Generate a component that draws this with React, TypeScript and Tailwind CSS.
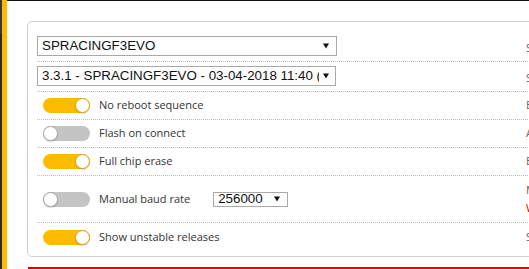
import React from "react";

type ToggleRowProps = {
  label: string;
  on: boolean;
  note: string;
};

function Arrow() {
  return (
    <svg width="6" height="6" viewBox="0 0 6 6" className="shrink-0">
      <polygon points="0,0.5 6,0.5 3,5.5" fill="#111" />
    </svg>
  );
}

function Toggle({ on }: { on: boolean }) {
  return (
    <div
      className={`relative h-[15px] w-[47px] shrink-0 rounded-full ${
        on ? "bg-[#ffbb00]" : "bg-[#c4c4c4]"
      }`}
    >
      <div
        className={`absolute top-0 h-[15px] w-[15px] rounded-full bg-white ${
          on
            ? "right-0 border border-[#d9a21b]"
            : "left-0 border border-[#a8a8a8]"
        } shadow-[0_1px_1px_rgba(0,0,0,0.15)]`}
      />
    </div>
  );
}

function ToggleRow({ label, on, note }: ToggleRowProps) {
  return (
    <div className="flex h-[28px] items-center overflow-hidden border-b border-dotted border-[#bdbdbd]">
      <div className="flex w-[489px] shrink-0 items-center pl-[6px]">
        <Toggle on={on} />
        <span className="ml-[9px] whitespace-nowrap text-[11px] text-[#333]">
          {label}
        </span>
      </div>
      <div className="shrink-0 whitespace-nowrap text-[11px] text-[#666]">
        {note}
      </div>
    </div>
  );
}

export default function App() {
  return (
    <div className="relative flex h-[269px] w-[529px] overflow-hidden bg-white font-['Open_Sans',sans-serif]">
      <div className="flex h-full w-[2px] shrink-0 flex-col">
        <div className="h-[33px] bg-[#3a3a3a]" />
        <div className="flex-1 bg-[#2b2b2b]" />
      </div>
      <div className="h-full w-[5px] shrink-0 bg-[#ffbb00]" />

      <div className="flex min-w-0 flex-1 flex-col border-t border-[#111]">
        <div className="pl-[20px] pt-[20px]">
          <div className="w-[560px] rounded-[5px] border border-[#cfcfcf] pl-[9px] pt-[10px] pb-[5px]">
            {/* board select */}
            <div className="flex h-[30px] items-start overflow-hidden border-b border-dotted border-[#bdbdbd] pt-[4px]">
              <div className="w-[489px] shrink-0">
                <div className="flex h-[20px] w-[300px] items-center border border-[#a9a9a9] pl-[4px] pr-[7px] font-['Liberation_Sans',Arial,sans-serif] text-[13.333px] text-[#111]">
                  <span className="flex-1">SPRACINGF3EVO</span>
                  <Arrow />
                </div>
              </div>
              <div className="shrink-0 self-center whitespace-nowrap text-[11px] text-[#666]">
                Select your board to see available online firmware releases
              </div>
            </div>

            {/* firmware select */}
            <div className="flex h-[30px] items-start overflow-hidden border-b border-dotted border-[#bdbdbd] pt-[4px]">
              <div className="w-[489px] shrink-0">
                <div className="flex h-[20px] w-[299px] items-center border border-[#a9a9a9] pl-[4px] pr-[6px] font-['Liberation_Sans',Arial,sans-serif] text-[13.333px] text-[#111]">
                  <span className="w-[277px] overflow-hidden whitespace-nowrap">
                    3.3.1 - SPRACINGF3EVO - 03-04-2018 11:40 (Official)
                  </span>
                  <span className="flex-1" />
                  <Arrow />
                </div>
              </div>
              <div className="shrink-0 self-center whitespace-nowrap text-[11px] text-[#666]">
                Select firmware version for your board
              </div>
            </div>

            <ToggleRow
              label="No reboot sequence"
              on={true}
              note="Enable if you powered your FC while the bootloader pins are jumped"
            />
            <ToggleRow
              label="Flash on connect"
              on={false}
              note="Attempt to flash the board automatically"
            />
            <ToggleRow
              label="Full chip erase"
              on={true}
              note="Erases all configuration data currently stored on the board"
            />

            {/* baud rate */}
            <div className="flex h-[47px] items-center overflow-hidden border-b border-dotted border-[#bdbdbd]">
              <div className="flex w-[489px] shrink-0 items-center pl-[6px]">
                <Toggle on={false} />
                <span className="ml-[9px] whitespace-nowrap text-[11px] text-[#333]">
                  Manual baud rate
                </span>
                <div className="ml-[23px] flex h-[15px] w-[75px] items-center border border-[#a9a9a9] pl-[4px] pr-[7px] font-['Liberation_Sans',Arial,sans-serif] text-[13.333px] text-[#111]">
                  <span className="flex-1 leading-none">256000</span>
                  <Arrow />
                </div>
              </div>
              <div className="flex shrink-0 flex-col whitespace-nowrap text-[11px] leading-[18px]">
                <span className="text-[#666]">Manual selection of baud rate</span>
                <span className="text-[#e60000]">WARNING: use with care</span>
              </div>
            </div>

            <div className="flex h-[28px] items-center overflow-hidden">
              <div className="flex w-[489px] shrink-0 items-center pl-[6px]">
                <Toggle on={true} />
                <span className="ml-[9px] whitespace-nowrap text-[11px] text-[#333]">
                  Show unstable releases
                </span>
              </div>
              <div className="shrink-0 whitespace-nowrap text-[11px] text-[#666]">
                Show Release-Candidates and Development Releases
              </div>
            </div>
          </div>
        </div>

        <div className="ml-[21px] mt-[10px] h-[10px] w-[560px] shrink-0 border-t-2 border-[#e60000] bg-[#fafafa]" />
      </div>
    </div>
  );
}
